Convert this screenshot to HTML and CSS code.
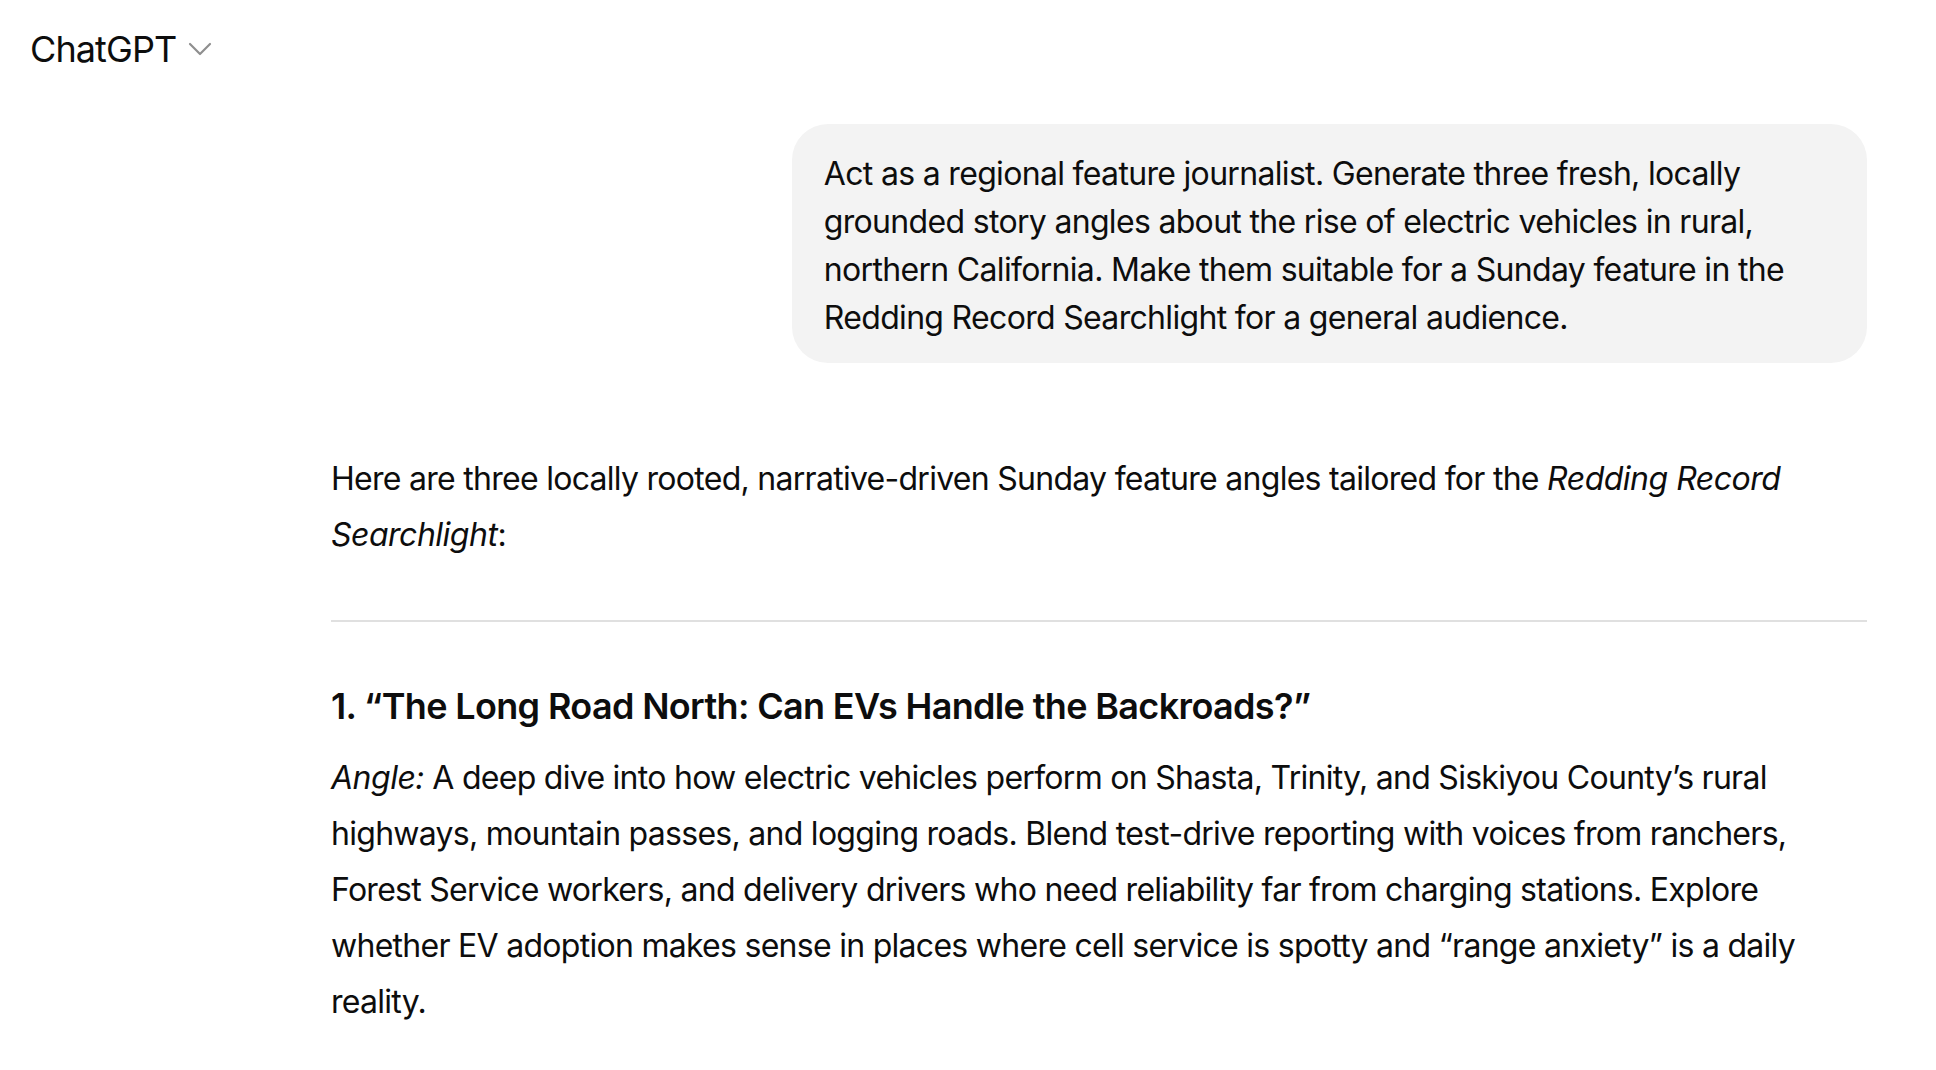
FILE: index.html
```html
<!DOCTYPE html>
<html lang="en">
<head>
<meta charset="utf-8">
<title>ChatGPT</title>
<link rel="stylesheet" href="styles.css">
</head>
<body>
<header class="topbar">
  <span class="model-name">ChatGPT</span>
  <svg class="chevron" width="24" height="14" viewBox="0 0 24 14" aria-hidden="true">
    <path d="M2 2 L12 12 L22 2" fill="none" stroke="currentColor" stroke-width="2.2" stroke-linecap="round" stroke-linejoin="round"/>
  </svg>
</header>
<main class="thread">
  <section class="user-turn">
    <div class="user-bubble">Act as a regional feature journalist. Generate three fresh, locally grounded story angles about the rise of electric vehicles in rural, northern California. Make them suitable for a Sunday feature in the Redding Record Searchlight for a general audience.</div>
  </section>
  <article class="assistant-turn">
    <p class="para">Here are three locally rooted, narrative-driven Sunday feature angles tailored for the <em>Redding Record Searchlight</em>:</p>
    <hr class="divider">
    <h3 class="angle-title">1. “The Long Road North: Can EVs Handle the Backroads?”</h3>
    <p class="para"><em>Angle:</em> A deep dive into how electric vehicles perform on Shasta, Trinity, and Siskiyou County’s rural highways, mountain passes, and logging roads. Blend test-drive reporting with voices from ranchers, Forest Service workers, and delivery drivers who need reliability far from charging stations. Explore whether EV adoption makes sense in places where cell service is spotty and “range anxiety” is a daily reality.</p>
  </article>
</main>
</body>
</html>
```
FILE: styles.css
```css
html, body {
  margin: 0;
  padding: 0;
  background: #ffffff;
}

body {
  font-family: Inter, "Noto Sans", sans-serif;
  color: #0d0d0d;
  overflow: hidden;
}

.topbar {
  display: flex;
  align-items: center;
  padding: 21px 30px 0;
  height: 56px;
}

.model-name {
  font-size: 36px;
  line-height: 56px;
  font-weight: 400;
  letter-spacing: -0.9px;
}

.chevron {
  margin-left: 12px;
  color: #8f8f8f;
  display: block;
}

.thread {
  max-width: 1536px;
  margin: 47px 69px 0 auto;
}

.user-turn {
  display: flex;
  justify-content: flex-end;
}

.user-bubble {
  max-width: 70%;
  box-sizing: border-box;
  background: #f3f3f3;
  border-radius: 36px;
  padding: 26px 32px 21px;
  font-size: 32px;
  line-height: 48px;
  letter-spacing: -0.68px;
}

.assistant-turn {
  padding-top: 88px;
}

.para {
  margin: 0;
  font-size: 32px;
  line-height: 56px;
  letter-spacing: -0.72px;
}

.para em {
  font-style: italic;
  letter-spacing: -0.5px;
}

.divider {
  border: 0;
  border-top: 2px solid #e0e0e0;
  margin: 57px 0 56px;
  height: 0;
}

.angle-title {
  margin: 0 0 16px;
  font-size: 36px;
  line-height: 56px;
  font-weight: 600;
  letter-spacing: -0.65px;
}
```
